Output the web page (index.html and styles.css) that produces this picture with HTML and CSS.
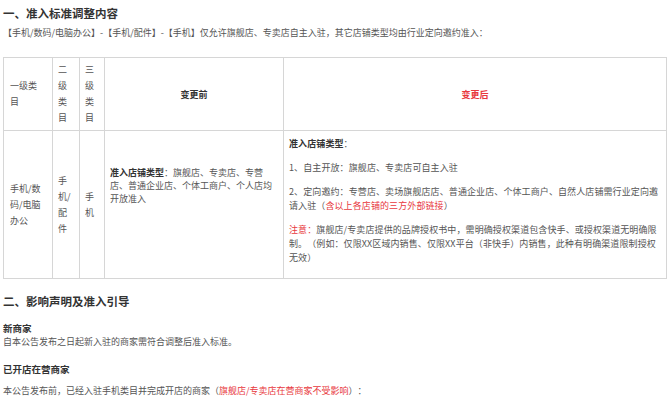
FILE: index.html
```html
<!DOCTYPE html>
<html lang="zh-CN">
<head>
<meta charset="utf-8">
<title>准入标准调整</title>
<link rel="stylesheet" href="styles.css">
</head>
<body>
<div class="page">
  <h2 class="sec-title">一、准入标准调整内容</h2>
  <p class="intro">【手机/数码/电脑办公】-【手机/配件】-【手机】仅允许旗舰店、专卖店自主入驻，其它店铺类型均由行业定向邀约准入：</p>
  <table class="rules">
    <colgroup>
      <col class="c1"><col class="c2"><col class="c3"><col class="c4"><col class="c5">
    </colgroup>
    <tr class="head-row">
      <td class="cat first">一级类目</td>
      <td class="cat">二级类目</td>
      <td class="cat">三级类目</td>
      <th class="hd">变更前</th>
      <th class="hd red">变更后</th>
    </tr>
    <tr class="body-row">
      <td class="cat first">手机/数码/电脑办公</td>
      <td class="cat">手机/配件</td>
      <td class="cat">手机</td>
      <td class="before"><b>准入店铺类型</b>：旗舰店、专卖店、专营店、普通企业店、个体工商户、个人店均开放准入</td>
      <td class="after">
        <p><b>准入店铺类型</b>：</p>
        <p>1、自主开放：旗舰店、专卖店可自主入驻</p>
        <p>2、定向邀约：专营店、卖场旗舰店店、普通企业店、个体工商户、自然人店铺需行业定向邀请入驻（<span class="red">含以上各店铺的三方外部链接</span>）</p>
        <p><span class="red">注意：</span>旗舰店/专卖店提供的品牌授权书中，需明确授权渠道包含快手、或授权渠道无明确限制。（例如：仅限XX区域内销售、仅限XX平台（非快手）内销售，此种有明确渠道限制授权无效）</p>
      </td>
    </tr>
  </table>
  <h2 class="sec-title second">二、影响声明及准入引导</h2>
  <h3 class="sub">新商家</h3>
  <p class="txt">自本公告发布之日起新入驻的商家需符合调整后准入标准。</p>
  <h3 class="sub sub2">已开店在营商家</h3>
  <p class="txt last">本公告发布前，已经入驻手机类目并完成开店的商家（<span class="red">旗舰店/专卖店在营商家不受影响</span>）：</p>
</div>
</body>
</html>
```

FILE: styles.css
```css
html, body {
  margin: 0;
  padding: 0;
  background: #fff;
}
body {
  font-family: "Noto Sans CJK SC", "Noto Sans", sans-serif;
  font-size: 9px;
  color: #555;
  text-spacing-trim: space-all;
}
.page {
  padding: 0 5px 0 3px;
}
.sec-title {
  margin: 0;
  padding-top: 5px;
  font-size: 11.5px;
  line-height: 16px;
  font-weight: bold;
  color: #333;
}
.intro {
  margin: 5px 0 17px;
  line-height: 14px;
}
.rules {
  border-collapse: collapse;
  table-layout: fixed;
  width: 663px;
  border: 1px solid #d6d6d6;
}
.rules td, .rules th {
  border: 1px solid #d6d6d6;
  padding: 0 5px;
  font-size: 9px;
}
.c1 { width: 49px; }
.c2 { width: 27px; }
.c3 { width: 25px; }
.c4 { width: 179px; }
.c5 { width: 383px; }
.head-row { height: 73px; }
.body-row { height: 148px; }
.cat {
  vertical-align: middle;
  line-height: 16px;
}
.rules .first {
  padding: 0 9px 0 6px;
}
.hd {
  vertical-align: middle;
  text-align: center;
  font-weight: bold;
  color: #333;
}
.rules .before {
  vertical-align: top;
  padding-top: 35px;
  line-height: 13px;
}
.before b, .after b {
  color: #333;
}
.rules .after {
  vertical-align: top;
  padding: 6px 4px 0 5px;
  line-height: 14px;
  letter-spacing: 0.1px;
}
.after p {
  margin: 0 0 10px;
}
.red {
  color: #e8383d;
}
.second {
  margin-top: 9px;
}
.sub {
  margin: 12px 0 0;
  font-size: 9.5px;
  line-height: 14px;
  font-weight: bold;
  color: #333;
}
.sub2 {
  margin-top: 13px;
}
.txt {
  margin: 0;
  line-height: 14px;
}
.last {
  margin-top: 8px;
}
```
